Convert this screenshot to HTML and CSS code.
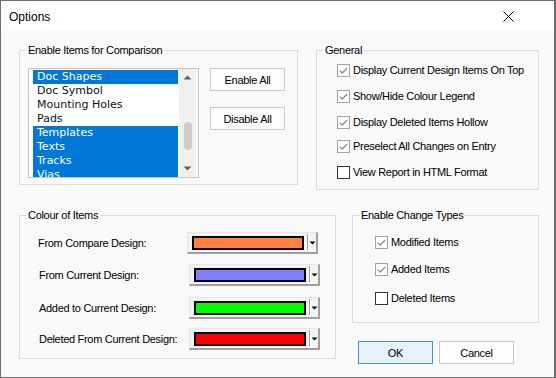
FILE: index.html
```
<!DOCTYPE html>
<html>
<head>
<meta charset="utf-8">
<link rel="stylesheet" href="styles.css">
</head>
<body>
<div class="window">
  <div class="titlebar">
    <span class="title">Options</span>
    <svg class="close" width="11" height="11" viewBox="0 0 11 11"><path d="M0.5 0.5 L10.5 10.5 M10.5 0.5 L0.5 10.5" stroke="#000" stroke-width="1" fill="none"/></svg>
  </div>
  <div class="content">
    <div class="row row-top">
      <div class="group g-items">
        <span class="legend">Enable Items for Comparison</span>
        <div class="items-body">
          <div class="listbox">
            <div class="list">
              <div class="item sel">Doc Shapes</div>
              <div class="item">Doc Symbol</div>
              <div class="item">Mounting Holes</div>
              <div class="item">Pads</div>
              <div class="item sel">Templates</div>
              <div class="item sel">Texts</div>
              <div class="item sel">Tracks</div>
              <div class="item sel">Vias</div>
            </div>
            <div class="scrollbar">
              <div class="sb-btn"><svg width="17" height="17" viewBox="0 0 17 17"><polygon points="4.5,10.5 8.5,6.5 12.5,10.5" fill="#606060"/></svg></div>
              <div class="sb-track"><div class="thumb"></div></div>
              <div class="sb-btn"><svg width="17" height="17" viewBox="0 0 17 17"><polygon points="4.5,6.5 8.5,10.5 12.5,6.5" fill="#606060"/></svg></div>
            </div>
          </div>
          <div class="btn-col">
            <div class="btn">Enable All</div>
            <div class="btn">Disable All</div>
          </div>
        </div>
      </div>
      <div class="group g-general">
        <span class="legend">General</span>
        <div class="checks general-checks">
          <div class="check"><svg width="13" height="13" viewBox="0 0 13 13"><rect x="0.5" y="0.5" width="12" height="12" fill="#fff" stroke="#a2a2a2"/><path d="M2.8 6.6 L5.2 9 L10.2 4" fill="none" stroke="#8c8c8c" stroke-width="1.3"/></svg><span>Display Current Design Items On Top</span></div>
          <div class="check"><svg width="13" height="13" viewBox="0 0 13 13"><rect x="0.5" y="0.5" width="12" height="12" fill="#fff" stroke="#a2a2a2"/><path d="M2.8 6.6 L5.2 9 L10.2 4" fill="none" stroke="#8c8c8c" stroke-width="1.3"/></svg><span>Show/Hide Colour Legend</span></div>
          <div class="check"><svg width="13" height="13" viewBox="0 0 13 13"><rect x="0.5" y="0.5" width="12" height="12" fill="#fff" stroke="#a2a2a2"/><path d="M2.8 6.6 L5.2 9 L10.2 4" fill="none" stroke="#8c8c8c" stroke-width="1.3"/></svg><span>Display Deleted Items Hollow</span></div>
          <div class="check tight"><svg width="13" height="13" viewBox="0 0 13 13"><rect x="0.5" y="0.5" width="12" height="12" fill="#fff" stroke="#a2a2a2"/><path d="M2.8 6.6 L5.2 9 L10.2 4" fill="none" stroke="#8c8c8c" stroke-width="1.3"/></svg><span>Preselect All Changes on Entry</span></div>
          <div class="check"><svg width="13" height="13" viewBox="0 0 13 13"><rect x="0.5" y="0.5" width="12" height="12" fill="#fff" stroke="#333"/></svg><span>View Report in HTML Format</span></div>
        </div>
      </div>
    </div>
    <div class="row row-bottom">
      <div class="group g-colour">
        <span class="legend">Colour of Items</span>
        <div class="colour-rows">
          <div class="crow first"><span class="clabel">From Compare Design:</span><div class="combo"><div class="swatch orange"></div><div class="sep"></div><div class="arrow"><svg width="7" height="4" viewBox="0 0 7 4"><polygon points="0.5,0.5 6.5,0.5 3.5,3.5" fill="#000"/></svg></div></div></div>
          <div class="crow"><span class="clabel">From Current Design:</span><div class="combo"><div class="swatch blue"></div><div class="sep"></div><div class="arrow"><svg width="7" height="4" viewBox="0 0 7 4"><polygon points="0.5,0.5 6.5,0.5 3.5,3.5" fill="#000"/></svg></div></div></div>
          <div class="crow r3"><span class="clabel">Added to Current Design:</span><div class="combo"><div class="swatch green"></div><div class="sep"></div><div class="arrow"><svg width="7" height="4" viewBox="0 0 7 4"><polygon points="0.5,0.5 6.5,0.5 3.5,3.5" fill="#000"/></svg></div></div></div>
          <div class="crow r4"><span class="clabel">Deleted From Current Design:</span><div class="combo"><div class="swatch red"></div><div class="sep"></div><div class="arrow"><svg width="7" height="4" viewBox="0 0 7 4"><polygon points="0.5,0.5 6.5,0.5 3.5,3.5" fill="#000"/></svg></div></div></div>
        </div>
      </div>
      <div class="right-col">
        <div class="group g-types">
          <span class="legend">Enable Change Types</span>
          <div class="checks type-checks">
            <div class="check"><svg width="13" height="13" viewBox="0 0 13 13"><rect x="0.5" y="0.5" width="12" height="12" fill="#fff" stroke="#a2a2a2"/><path d="M2.8 6.6 L5.2 9 L10.2 4" fill="none" stroke="#8c8c8c" stroke-width="1.3"/></svg><span>Modified Items</span></div>
            <div class="check"><svg width="13" height="13" viewBox="0 0 13 13"><rect x="0.5" y="0.5" width="12" height="12" fill="#fff" stroke="#a2a2a2"/><path d="M2.8 6.6 L5.2 9 L10.2 4" fill="none" stroke="#8c8c8c" stroke-width="1.3"/></svg><span>Added Items</span></div>
            <div class="check wide"><svg width="13" height="13" viewBox="0 0 13 13"><rect x="0.5" y="0.5" width="12" height="12" fill="#fff" stroke="#333"/></svg><span>Deleted Items</span></div>
          </div>
        </div>
        <div class="dlg-buttons">
          <div class="btn default">OK</div>
          <div class="btn">Cancel</div>
        </div>
      </div>
    </div>
  </div>
</div>
</body>
</html>
```

FILE: styles.css
```
* { box-sizing: border-box; }
body {
  margin: 0;
  background: #fff;
  font-family: "Liberation Sans", Arial, sans-serif;
  font-size: 11px;
  letter-spacing: -0.3px;
  color: #000;
}
.window {
  width: 556px;
  height: 378px;
  border: 1px solid #6e6e6e;
  border-right-width: 2px;
  background: #f9f9f9;
  display: flex;
  flex-direction: column;
  overflow: hidden;
}
.titlebar {
  height: 30px;
  flex: none;
  background: #fff;
  display: flex;
  align-items: center;
  justify-content: space-between;
  padding-left: 8px;
}
.title { font-size: 12px; letter-spacing: 0; padding-top: 1px; }
.close { margin-right: 40px; }
.content {
  padding: 19px 0 0 18px;
}
.row { display: flex; align-items: flex-start; }
.row-top { gap: 18px; }
.row-bottom { gap: 16px; margin-top: 25px; }
.group {
  border: 1px solid #dcdcdc;
  display: flex;
  flex-direction: column;
}
.legend {
  align-self: flex-start;
  margin: -8px 0 0 6px;
  padding: 0 2px;
  height: 15px;
  line-height: 15px;
  background: #f9f9f9;
  white-space: nowrap;
}
.g-items { width: 279px; height: 135px; }
.g-general { width: 223px; height: 140px; }
.g-colour { width: 317px; height: 144px; }
.g-types { width: 187px; height: 108px; }

.items-body {
  display: flex;
  gap: 11px;
  margin: 10px 0 0 8px;
}
.listbox {
  width: 171px;
  height: 110px;
  border: 1px solid #c4c4c4;
  background: #fff;
  display: flex;
  padding: 1px 2px 0 4px;
  overflow: hidden;
}
.list { width: 145px; height: 107px; overflow: hidden; margin-right: 1px; }
.item {
  height: 14px;
  line-height: 14px;
  padding-left: 4px;
  font-family: "DejaVu Sans", sans-serif;
  font-size: 11px;
  letter-spacing: 0;
  color: #111;
  white-space: nowrap;
}
.item.sel { background: #0078d7; color: #fff; }
.scrollbar {
  width: 17px;
  height: 108px;
  margin-top: -1px;
  background: #f0f0f0;
  display: flex;
  flex-direction: column;
}
.sb-btn { height: 17px; flex: none; }
.sb-btn svg { display: block; }
.sb-track { flex: 1; padding-top: 36px; }
.thumb {
  width: 8px;
  height: 28px;
  margin: 0 auto;
  background: #cdcdcd;
  border-radius: 4px;
}
.btn-col { display: flex; flex-direction: column; gap: 16px; }
.btn {
  width: 75px;
  height: 23px;
  border: 1px solid #cacaca;
  background: #fdfdfd;
  display: flex;
  align-items: center;
  justify-content: center;
  white-space: nowrap;
}
.btn.default { background: #e5f1fb; border-color: #4a8fd0; }

.checks { display: flex; flex-direction: column; }
.check {
  height: 16px;
  display: flex;
  align-items: center;
  gap: 3px;
  white-space: nowrap;
}
.check svg { flex: none; display: block; }
.general-checks { margin: 4px 0 0 20px; gap: 10px; }
.general-checks .tight { margin-top: -2px; }
.type-checks { margin: 11px 0 0 22px; gap: 11px; }
.type-checks .wide { margin-top: 2px; }

.colour-rows { display: flex; flex-direction: column; margin-top: 9px; }
.crow { display: flex; align-items: center; height: 22px; padding-left: 19px; margin-top: 10px; }
.crow.first { padding-left: 18px; margin-top: 0; }
.crow.r3 { margin-top: 11px; }
.crow.r4 { margin-top: 9px; }
.clabel { width: 150px; white-space: nowrap; }
.crow.first .clabel { width: 149px; }
.combo {
  width: 131px;
  height: 22px;
  display: flex;
  align-items: stretch;
  padding: 3px 0 2px 4px;
  background: #f3f3f3;
  border-top: 1px solid #e6e6e6;
  border-left: 1px solid #e6e6e6;
  border-right: 2px solid #a0a0a0;
  border-bottom: 2px solid #a0a0a0;
}
.swatch { width: 112px; border: 2px solid #000; }
.orange { background: #ff8040; }
.blue { background: #8080ff; }
.green { background: #00ff00; }
.red { background: #ff0000; }
.sep {
  width: 2px;
  margin-left: 3px;
  border-left: 1px solid #a0a0a0;
  border-right: 1px solid #fff;
  margin-top: -2px;
}
.arrow { flex: 1; display: flex; align-items: center; justify-content: center; }
.arrow svg { display: block; }

.right-col { display: flex; flex-direction: column; }
.dlg-buttons { display: flex; gap: 6px; margin: 18px 0 0 6px; }
```
